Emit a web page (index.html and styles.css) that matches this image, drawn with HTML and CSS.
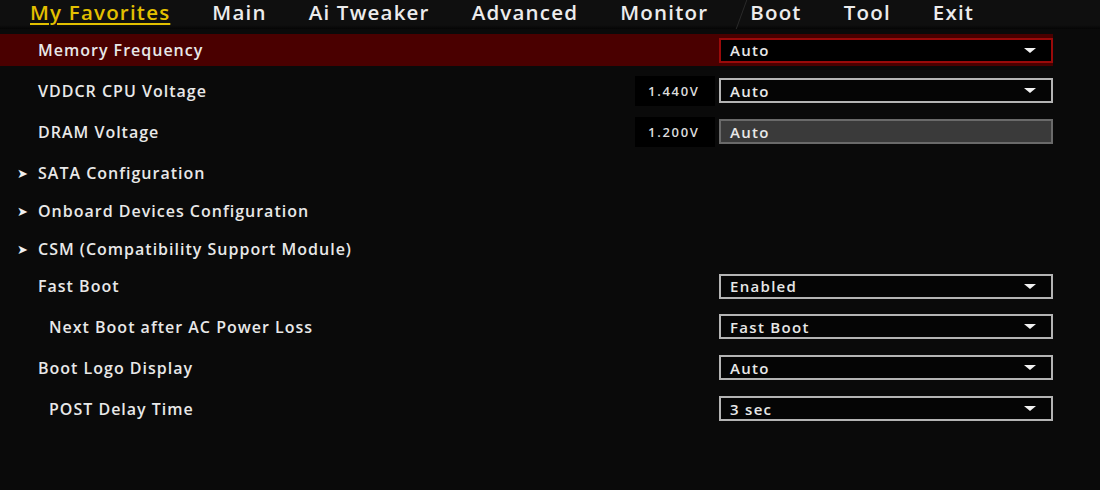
FILE: index.html
```html
<!DOCTYPE html>
<html lang="en">
<head>
  <meta charset="UTF-8" />
  <title>My Favorites - BIOS</title>
  <link rel="stylesheet" href="styles.css">
</head>
<body>
  <header class="tabs">
    <span class="tab active">My Favorites</span>
    <span class="tab">Main</span>
    <span class="tab">Ai Tweaker</span>
    <span class="tab">Advanced</span>
    <span class="tab">Monitor</span>
    <span class="tab slash">Boot</span>
    <span class="tab">Tool</span>
    <span class="tab">Exit</span>
  </header>

  <main class="list">
    <div class="row selected">
      <span class="label">Memory Frequency</span>
      <div class="select red"><span>Auto</span><i class="caret"></i></div>
    </div>

    <div class="row">
      <span class="label">VDDCR CPU Voltage</span>
      <span class="volt">1.440V</span>
      <div class="select"><span>Auto</span><i class="caret"></i></div>
    </div>

    <div class="row">
      <span class="label">DRAM Voltage</span>
      <span class="volt">1.200V</span>
      <div class="select input"><span>Auto</span></div>
    </div>

    <div class="row sub"><span class="arrow">➤</span><span class="label">SATA Configuration</span></div>
    <div class="row sub"><span class="arrow">➤</span><span class="label">Onboard Devices Configuration</span></div>
    <div class="row sub"><span class="arrow">➤</span><span class="label">CSM (Compatibility Support Module)</span></div>

    <div class="row short">
      <span class="label">Fast Boot</span>
      <div class="select"><span>Enabled</span><i class="caret"></i></div>
    </div>

    <div class="row indent">
      <span class="label">Next Boot after AC Power Loss</span>
      <div class="select"><span>Fast Boot</span><i class="caret"></i></div>
    </div>

    <div class="row">
      <span class="label">Boot Logo Display</span>
      <div class="select"><span>Auto</span><i class="caret"></i></div>
    </div>

    <div class="row indent">
      <span class="label">POST Delay Time</span>
      <div class="select"><span>3 sec</span><i class="caret"></i></div>
    </div>
  </main>
</body>
</html>
```

FILE: styles.css
```css
:root {
  --bg: #0a0a0a;
  --text: #e8e8e8;
  --yellow: #e3c000;
  --red-row: #4a0000;
  --red-border: #9a0a0a;
  --box-border: #b4b4b4;
}

* {
  box-sizing: border-box;
}

body, html {
  margin: 0;
  height: 100%;
  font-family: 'Open Sans', 'DejaVu Sans', sans-serif;
  font-weight: 600;
  background-color: var(--bg);
  color: var(--text);
}

/* top menu */
.tabs {
  display: flex;
  align-items: flex-start;
  gap: 42px;
  height: 29px;
  padding-left: 30px;
  background: linear-gradient(to bottom, #0f0f0f 0, #0f0f0f 25px, #050505 29px);
}

.tab {
  font-size: 20.5px;
  line-height: 24px;
  letter-spacing: 1.2px;
  color: #ececec;
}

.tab.active {
  color: var(--yellow);
  text-decoration: underline;
  text-decoration-thickness: 2px;
  text-underline-offset: 3px;
}

/* faint stroke in the menu backdrop */
.tab.slash {
  position: relative;
}

.tab.slash::before {
  content: "";
  position: absolute;
  left: -9px;
  top: 0;
  width: 1px;
  height: 29px;
  background: #2a2a2a;
  transform: skewX(-20deg);
}

/* settings list */
.list {
  width: 1078px;
}

.row {
  display: flex;
  align-items: center;
  height: 41px;
  padding: 0 25px 0 38px;
}

.row.selected {
  background: var(--red-row);
  background-clip: content-box;
  padding: 5px 25px 4px 0;
}

.row.selected .label {
  padding-left: 38px;
}

.row.sub {
  height: 38px;
  padding-top: 3px;
  padding-left: 17px;
}

.row.short {
  height: 40px;
}

.row.indent {
  padding-left: 49px;
}

.label {
  font-size: 16px;
  letter-spacing: 1px;
  flex: 1;
}

.arrow {
  width: 21px;
  font-size: 13px;
  color: #f0f0f0;
}

.volt {
  width: 80px;
  height: 30px;
  margin-right: 4px;
  background: #000;
  font-size: 13px;
  letter-spacing: 1.7px;
  line-height: 30px;
  padding-left: 13px;
  color: #dcdcdc;
}

.select {
  display: flex;
  align-items: center;
  justify-content: space-between;
  width: 334px;
  height: 25px;
  padding: 0 15px 0 9px;
  border: 2px solid var(--box-border);
  background: #050505;
  font-size: 15px;
  letter-spacing: 1.3px;
}

.select.red {
  border-color: var(--red-border);
  background: #000;
}

.select.input {
  background: #3a3a3a;
  border-color: #6a6a6a;
}

.caret {
  width: 0;
  height: 0;
  border-left: 6px solid transparent;
  border-right: 6px solid transparent;
  border-top: 5px solid #f2f2f2;
}
```
